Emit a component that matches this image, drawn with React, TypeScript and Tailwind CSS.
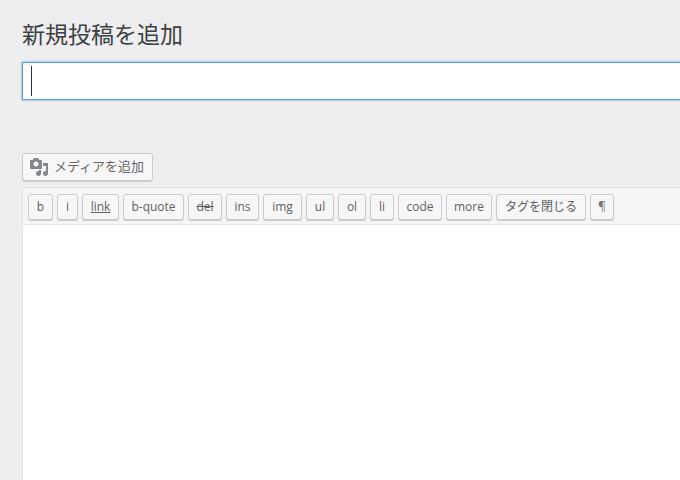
const FONT = "font-['Open_Sans','Noto_Sans_CJK_JP',sans-serif]";

const tags = [
  { label: "b", w: "w-[25px]" },
  { label: "i", w: "w-[21px]" },
  { label: "link", w: "w-[37px]", cls: "underline" },
  { label: "b-quote", w: "w-[61px]" },
  { label: "del", w: "w-[34px]", cls: "line-through" },
  { label: "ins", w: "w-[33px]" },
  { label: "img", w: "w-[39px]" },
  { label: "ul", w: "w-[28px]" },
  { label: "ol", w: "w-[28px]" },
  { label: "li", w: "w-[24px]" },
  { label: "code", w: "w-[44px]" },
  { label: "more", w: "w-[46px]" },
  { label: "タグを閉じる", w: "w-[90px]" },
  { label: "¶", w: "w-[24px]", cls: "text-[#777]" },
];

function MediaIcon() {
  return (
    <svg viewBox="0 0 20 20" className="w-5 h-5 fill-[#82878c]">
      <path d="M13 11V4c0-.55-.45-1-1-1h-1.670L9 1H5L3.670 3H2c-.55 0-1 .45-1 1v7c0 .55.45 1 1 1h10c.55 0 1-.45 1-1zM7 4.500c1.380 0 2.500 1.120 2.500 2.500S8.380 9.500 7 9.500 4.500 8.380 4.500 7 5.620 4.500 7 4.500zM14 6h5v10.500c0 1.380-1.120 2.500-2.500 2.500S14 17.880 14 16.500s1.120-2.500 2.500-2.500c.17 0 .34.020.5.050V9h-3V6zm-4 8.050V13h2v3.500c0 1.380-1.120 2.500-2.500 2.500S7 17.880 7 16.500 8.120 14 9.500 14c.17 0 .34.020.5.050z" />
    </svg>
  );
}

export default function App() {
  return (
    <div className={`${FONT} h-[480px] overflow-hidden bg-[#eeeeee] pl-[22px] text-[#444]`}>
      {/* Heading */}
      <h1 className="pt-[19px] h-[62px] text-[23px] leading-[30px] text-[#3c4146]">新規投稿を追加</h1>

      {/* Title input */}
      <div className="w-[700px] h-[38px] flex items-center pl-[8px] bg-white border border-[#5b9dd9] shadow-[0_0_2px_rgba(30,140,190,0.8)]">
        <div className="w-px h-[30px] bg-[#333]" />
      </div>

      {/* Media button */}
      <div className="mt-[53px] w-[131px] h-[28px] flex items-center gap-[5px] pl-[6px] bg-[#f7f7f7] border border-[#cccccc] rounded-[3px] shadow-[0_1px_0_#cccccc] text-[13px] text-[#666]">
        <MediaIcon />
        <span>メディアを追加</span>
      </div>

      {/* Editor */}
      <div className="mt-[6px] w-[700px] h-[300px] bg-white border-l border-[#e5e5e5]">
        <div className="h-[38px] flex gap-[4px] pl-[5px] pt-[6px] bg-[#f5f5f5] border-t border-b border-[#e5e5e5]">
          {tags.map((t) => (
            <div
              key={t.label}
              className={`${t.w} h-[26px] flex items-center justify-center shrink-0 bg-[#f7f7f7] border border-[#cccccc] rounded-[3px] shadow-[0_1px_0_#cccccc] text-[12px] ${t.cls ?? ""} ${t.label === "¶" ? "" : "text-[#5f5f5f]"}`}
            >
              {t.label}
            </div>
          ))}
        </div>
      </div>
    </div>
  );
}
